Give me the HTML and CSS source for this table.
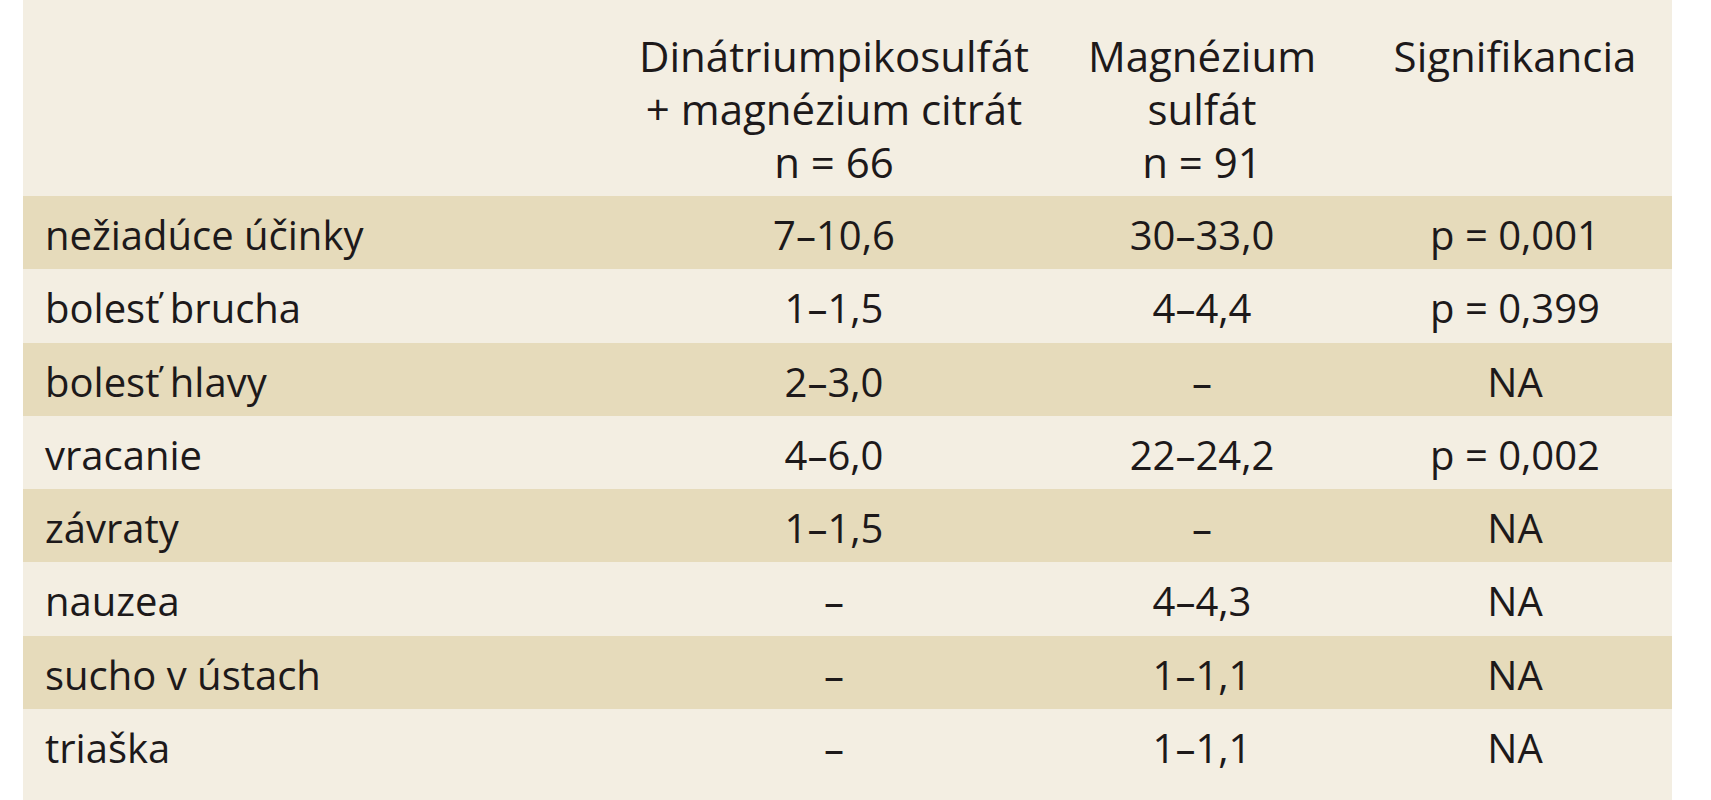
FILE: index.html
```html
<!DOCTYPE html>
<html lang="sk">
<head>
<meta charset="utf-8">
<title>Nežiadúce účinky</title>
<link rel="stylesheet" href="styles.css">
</head>
<body>
<div class="panel">
  <table class="tbl">
    <colgroup>
      <col class="c1"><col class="c2"><col class="c3"><col class="c4">
    </colgroup>
    <thead>
      <tr>
        <th></th>
        <th>Dinátriumpikosulfát<br>+ magnézium citrát<br>n = 66</th>
        <th>Magnézium<br>sulfát<br>n = 91</th>
        <th>Signifikancia</th>
      </tr>
    </thead>
    <tbody>
      <tr class="dark"><td>nežiadúce účinky</td><td>7–10,6</td><td>30–33,0</td><td>p = 0,001</td></tr>
      <tr><td>bolesť brucha</td><td>1–1,5</td><td>4–4,4</td><td>p = 0,399</td></tr>
      <tr class="dark"><td>bolesť hlavy</td><td>2–3,0</td><td>–</td><td>NA</td></tr>
      <tr><td>vracanie</td><td>4–6,0</td><td>22–24,2</td><td>p = 0,002</td></tr>
      <tr class="dark"><td>závraty</td><td>1–1,5</td><td>–</td><td>NA</td></tr>
      <tr><td>nauzea</td><td>–</td><td>4–4,3</td><td>NA</td></tr>
      <tr class="dark"><td>sucho v ústach</td><td>–</td><td>1–1,1</td><td>NA</td></tr>
      <tr><td>triaška</td><td>–</td><td>1–1,1</td><td>NA</td></tr>
    </tbody>
  </table>
</div>
</body>
</html>
```

FILE: styles.css
```css
html, body {
  margin: 0;
  padding: 0;
  background: #ffffff;
}

body {
  font-family: "Open Sans", "DejaVu Sans", sans-serif;
  color: #1d191a;
  width: 1711px;
  height: 800px;
  overflow: hidden;
}

.panel {
  margin-left: 23px;
  width: 1649px;
  height: 800px;
  background: #f3eee2;
}

.tbl {
  width: 1649px;
  border-collapse: collapse;
  table-layout: fixed;
  font-size: 40px;
  line-height: 53px;
  font-weight: 500;
}

.c1 { width: 599px; }
.c2 { width: 424px; }
.c3 { width: 312px; }
.c4 { width: 314px; }

.tbl th {
  font-weight: 500;
  font-size: 42px;
  text-align: center;
  vertical-align: top;
  height: 196px;
  box-sizing: border-box;
  padding: 29px 0 0 0;
}

.tbl td {
  height: 73.3px;
  box-sizing: border-box;
  padding: 12px 0 0 0;
  vertical-align: top;
  text-align: center;
}

.tbl td:first-child {
  text-align: left;
  padding-left: 22px;
}

.dark {
  background: #e6dbbb;
}
```
